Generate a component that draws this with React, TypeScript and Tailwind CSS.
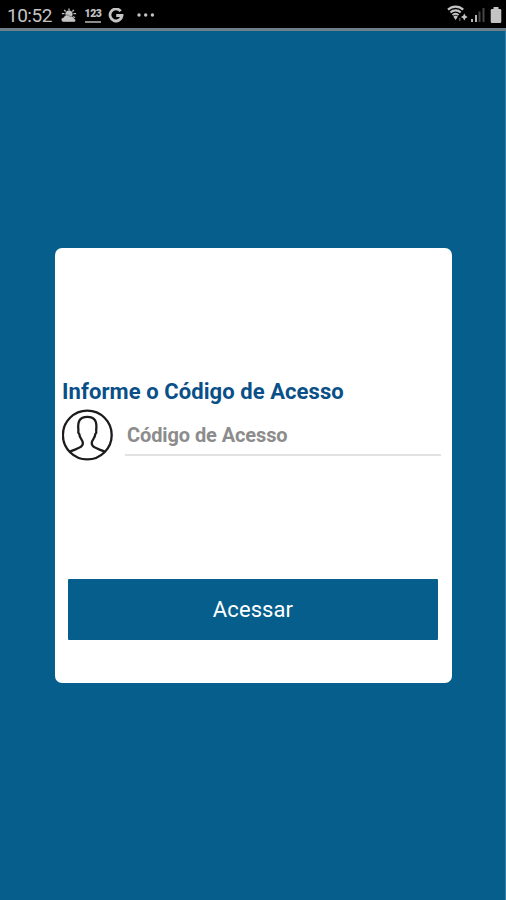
import { useState } from 'react'

function StatusBar() {
  return (
    <header className="flex h-[31px] shrink-0 justify-between border-b-[3px] border-[#6e7f8a] bg-black text-[#c4c4c4]">
      <div className="flex items-center pl-[7px] pt-[3px]">
        <span className="w-[46px] whitespace-nowrap text-[19px] leading-6 tracking-[-0.5px]">10:52</span>
        <svg className="ml-2 h-4 w-4" viewBox="0 0 16 16" fill="currentColor">
          <circle cx="8" cy="6" r="3.6" />
          <path
            d="M8 .4v2M3.2 1.8l1.4 1.7M12.8 1.8l-1.4 1.7M.9 5.6h2.6M12.5 5.6h2.6M12 8.6l2 1.2"
            stroke="currentColor"
            strokeWidth="1.3"
          />
          <path
            d="M2.6 14a2.3 2.3 0 0 1 0-4.6 3.7 3.7 0 0 1 6.5-.9 3.1 3.1 0 0 1 4.2 2.3 1.7 1.7 0 0 1 .2 3.2z"
            stroke="#000"
            strokeWidth=".4"
          />
        </svg>
        <span className="ml-2 flex h-[14px] w-4 flex-col items-center justify-between">
          <span className="text-[10.5px] font-black leading-[10px] tracking-[-0.4px]">123</span>
          <span className="h-[2px] w-4 bg-[#8c8c8c]" />
        </span>
        <svg className="ml-[7px] h-4 w-4" viewBox="0 0 16 16" fill="none" stroke="currentColor" strokeWidth="2.8">
          <path d="M12.7 3.2A6 6 0 1 0 14 7.5H8.2" />
        </svg>
        <svg className="ml-[13px] h-4 w-[18px]" viewBox="0 0 18 16" fill="currentColor">
          <circle cx="2" cy="7" r="1.7" />
          <circle cx="8.7" cy="7" r="1.7" />
          <circle cx="15.4" cy="7" r="1.7" />
        </svg>
      </div>
      <div className="flex items-start pr-[4px] pt-[5px]">
        <svg className="h-[19px] w-[22px]" viewBox="0 0 22 19" fill="none" stroke="currentColor">
          <path d="M1 4.6a11 11 0 0 1 15.2 0" strokeWidth="2.2" />
          <path d="M3.5 7.5a7.3 7.3 0 0 1 10.2 0" strokeWidth="2.1" />
          <path d="M5.6 10.1a4.2 4.2 0 0 1 6 0" strokeWidth="2" />
          <path d="M6.4 11.8 8.6 15l2.2-3.2a3 3 0 0 0-4.4 0z" fill="currentColor" stroke="none" />
          <path d="M12.7 13v3" stroke="#555" strokeWidth="1.5" />
          <path d="m17.3 8.6 1.2 2.2 2.2 1.2-2.2 1.2-1.2 2.2-1.2-2.2-2.2-1.2 2.2-1.2z" fill="currentColor" stroke="none" />
        </svg>
        <svg className="ml-[1px] h-[19px] w-[16px]" viewBox="0 0 16 19">
          <path d="M1 14h2v3H1zM5 10h2v7H5z" fill="#b5b5b5" />
          <path d="M8.5 6.5h2V17h-2zM12.5 3h2v14h-2z" fill="#444" />
        </svg>
        <svg className="ml-[4px] h-[19px] w-[12px]" viewBox="0 0 12 19" fill="currentColor">
          <path d="M3.5 2h5v2H10a1.3 1.3 0 0 1 1.3 1.3v11.4A1.3 1.3 0 0 1 10 18H2a1.3 1.3 0 0 1-1.3-1.3V5.3A1.3 1.3 0 0 1 2 4h1.5z" />
        </svg>
      </div>
    </header>
  )
}

function UserIcon() {
  return (
    <svg className="h-[52px] w-[52px] shrink-0" viewBox="0 0 52 52" fill="none" stroke="#1c1c1c" strokeWidth="2.3">
      <circle cx="25.3" cy="26" r="24.4" />
      <path
        d="M7.5 43c3.6-2.3 9.8-3.2 12.2-5.9 1.6-1.8 1.2-4.6-.3-6.7-1.2-1.6-1.9-3.3-2.1-5.3-1.1-1-1.3-2.4-.9-4C15.500 12.800 17.300 7.800 25.300 7.800s9.800 5 8.900 13.300c.4 1.600.2 3-.9 4-.2 2-.9 3.700-2.100 5.300-1.500 2.100-1.900 4.900-.3 6.700 2.400 2.700 8.600 3.600 12.200 5.900"
        strokeLinejoin="round"
      />
    </svg>
  )
}

export default function App() {
  const [code, setCode] = useState('')

  return (
    <div className="flex h-[900px] w-[506px] flex-col overflow-hidden bg-[#055e8c] font-[Roboto,sans-serif]">
      <StatusBar />
      <main className="flex flex-1 flex-col border-r border-[#3c7fa6] pl-[55px] pt-[217px]">
        <form
          onSubmit={(e) => e.preventDefault()}
          className="flex h-[435px] w-[396.5px] flex-col rounded-[7px] bg-white px-[7px] pt-[130px]"
        >
          <h1 className="h-[31px] whitespace-nowrap text-[22px] font-bold leading-[28px] tracking-[0.08px] text-[#0a5088]">
            Informe o Código de Acesso
          </h1>
          <div className="flex">
            <UserIcon />
            <input
              value={code}
              onChange={(e) => setCode(e.target.value)}
              placeholder="Código de Acesso"
              className="ml-[11px] h-[47px] w-[316px] border-b-2 border-[#e2e2e2] pl-[2px] pt-[7px] text-[20px] font-bold tracking-[-0.1px] outline-none placeholder:text-[#8c8c8c]"
            />
          </div>
          <button
            type="submit"
            className="ml-[6px] mt-[118px] h-[61px] w-[370px] rounded-[1px] bg-[#055e8c] text-[22px] tracking-[0.1px] text-white"
          >
            Acessar
          </button>
        </form>
      </main>
    </div>
  )
}
